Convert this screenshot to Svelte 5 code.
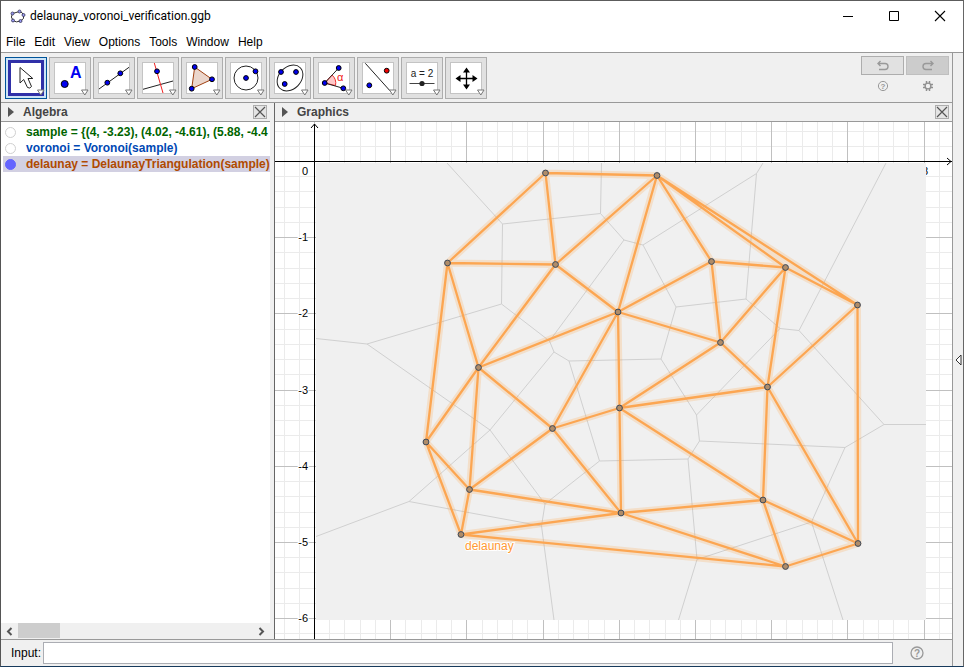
<script>
  const menus = ['File', 'Edit', 'View', 'Options', 'Tools', 'Window', 'Help'];

  const rows = [
    { text: 'sample = {(4, -3.23), (4.02, -4.61), (5.88, -4.4', kind: 'list', shown: false },
    { text: 'voronoi = Voronoi(sample)', kind: 'locus', shown: false },
    { text: 'delaunay = DelaunayTriangulation(sample)', kind: 'tri', shown: true }
  ];

  const tools = ['Move', 'Point', 'Line', 'Perpendicular Line', 'Polygon', 'Circle', 'Ellipse',
    'Angle', 'Reflect', 'Slider', 'Move Graphics View'];

  // Canvas origin and the length of one unit
  const ox = 39.5, oy = 39.5, unit = 76.2;
  const snap = (v) => Math.floor(v) + 0.5;
  const range = (a, b) => Array.from({ length: b - a + 1 }, (_, i) => a + i);
  const xs = range(-2, 120).map((i) => ({ p: snap(ox + (i * unit) / 5), major: i % 5 === 0 }));
  const ys = range(-2, 100).map((i) => ({ p: snap(oy + (i * unit) / 5), major: i % 5 === 0 }));
  const minorPath = xs.filter((l) => !l.major).map((l) => `M${l.p} 0V2000`).join('') +
    ys.filter((l) => !l.major).map((l) => `M0 ${l.p}H3000`).join('');
  const majorPath = xs.filter((l) => l.major).map((l) => `M${l.p} 0V2000`).join('') +
    ys.filter((l) => l.major).map((l) => `M0 ${l.p}H3000`).join('');

  const pts = {
    A: [270.5, 51], B: [382, 53.5], C: [172.5, 141], D: [280.5, 142.5], E: [436.5, 139.5],
    F: [510.5, 145.5], G: [582.5, 183], H: [343, 190], I: [445.5, 220.5], J: [203.5, 245.5],
    K: [492.5, 265], L: [344.5, 286], M: [277.5, 306.5], N: [151, 320], O: [194.5, 367.5],
    P: [488, 378], Q: [346, 391], R: [186, 412.5], S: [583, 421.5], T: [510.5, 444.5]
  };
  const edges = ('AB AC AD BD BH BE BF BG CD CJ CN DH DJ EH EI EF FI FK FG GK GS HJ HM HL HI IL IK ' +
    'JN JM JO KL KP KS LM LQ LP MO MQ NO NR OR OQ PQ PS PT QR QT RT ST').split(' ');
  const mesh = edges.map((e) => `M${pts[e[0]]}L${pts[e[1]]}`).join('');

  const cells =
    'M172 41L227.5 102L325.5 91.5L326.5 41M325.5 91.5L349 118L368 123L481.5 51.5L488 41' +
    'M349 118L274.5 219L226.5 182L227.5 102M226.5 182L92 222L41 216.5M92 222L215 308' +
    'L279 230L274.5 219M279 230L294 239L386 237L401 185L368 123M401 185L471 177L481.5 51.5' +
    'M471 177L505 206.5L524 208.5L611 41M524 208.5L609 302.5H651M609 302.5L570 325.5' +
    'L424.5 319L421.5 293L505 206.5M421.5 293L386 237M294 239L324.5 339L413 337L424.5 319' +
    'M324.5 339L270 382L215 308L134 379.5L41 414.5M134 379.5L266.5 404L270 382' +
    'M266.5 404L279 498M413 337L422 437.5L536.5 400L570 325.5M536.5 400L568 498' +
    'M422 437.5L403.5 498';
</script>

{#snippet dot(x, y, red = false)}
  <circle cx={x} cy={y} r="2.4" fill={red ? '#f00000' : '#0000f0'} stroke="#000" />
{/snippet}

{#snippet closeBox(name)}
  <button class="close" aria-label={name}>
    <svg width="12" height="12"><path d="M1 1L11 11M11 1L1 11" stroke="#555" stroke-width="1.2" /></svg>
  </button>
{/snippet}

<div class="window">
  <header class="title">
    <svg width="17" height="15" viewBox="0 0 17 15">
      <path d="M10.500 2.500L3.500 4.500Q1 8 4 11.500Q7 14 11.500 12Q16 10 14.500 6Q13.500 3 10.500 2.500Z" fill="none" stroke="#333" />
      <g fill="#9999f0" stroke="#335" stroke-width=".8">
        <circle cx="10.5" cy="2.5" r="1.5" /><circle cx="3.5" cy="4.5" r="1.5" />
        <circle cx="14.5" cy="6" r="1.5" /><circle cx="4" cy="11.5" r="1.5" />
        <circle cx="11.5" cy="12" r="1.5" />
      </g>
    </svg>
    <h1>delaunay_voronoi_verification.ggb</h1>
    <div class="caption">
      <button aria-label="Minimize"><svg width="12" height="12"><path d="M1 6.500H11" stroke="#000" /></svg></button>
      <button aria-label="Maximize"><svg width="12" height="12"><path d="M1.500 1.500H10.500V10.500H1.500Z" fill="none" stroke="#000" /></svg></button>
      <button aria-label="Close"><svg width="12" height="12"><path d="M1 1L11 11M11 1L1 11" stroke="#000" stroke-width="1.100" /></svg></button>
    </div>
  </header>

  <nav class="menu">
    {#each menus as m}<button>{m}</button>{/each}
  </nav>

  <div class="body">
    <div class="main">
      <div class="toolbar">
        <div class="tools">
          {#each tools as name, i}
            <button class="tool" class:active={i === 0} aria-label={name}>
              <svg width="40" height="40" viewBox="1 1 40 40" fill="none">
                {#if i === 0}
                  <rect x="4.5" y="4.500" width="33" height="33" fill="#fff" stroke="#3030a8" stroke-width="3" />
                  <path d="M15 10.500V26L18.700 22.500L22.500 30.500Q25 32 26.500 29.500L23 21.500H27.800Z" fill="#fff" stroke="#222" />
                {:else}
                  <rect x="5.500" y="5.500" width="31" height="31" fill="#fff" stroke="#c4c4c4" />
                {/if}
                {#if i === 1}
                  <circle cx="15.700" cy="27" r="3.500" fill="#0000f0" stroke="#000" />
                  <text x="21" y="21" class="big">A</text>
                {:else if i === 2}
                  <path d="M6 32L36 10.300" stroke="#222" />
                  {@render dot(14.3, 25.7)}{@render dot(27.3, 16.3)}
                {:else if i === 3}
                  <path d="M6 32.300L36 24" stroke="#222" />
                  <path d="M17.300 6L26 36" stroke="#f02020" />
                  {@render dot(20, 14.3)}
                {:else if i === 4}
                  <path d="M13.700 10L10.700 31.700L31 22.300Z" fill="#ebd6cc" stroke="#a04010" />
                  {@render dot(13.7, 10)}{@render dot(10.7, 31.7)}{@render dot(31, 22.3)}
                {:else if i === 5}
                  <circle cx="21" cy="21" r="12" stroke="#222" />
                  {@render dot(21, 21)}{@render dot(30.5, 14.3)}
                {:else if i === 6}
                  <ellipse cx="21" cy="21" rx="14.500" ry="11" stroke="#222" transform="rotate(-45 21 21)" />
                  {@render dot(12, 15)}{@render dot(27, 15)}{@render dot(15.7, 27)}
                {:else if i === 7}
                  <path d="M11.700 26L19 18A11 11 0 0 1 22.500 28.500Z" fill="#ffc8c8" stroke="#f03030" />
                  <path d="M25.700 11L11.700 26L30.300 31.300" stroke="#222" />
                  {@render dot(25.7, 11)}{@render dot(11.7, 26)}{@render dot(30.3, 31.3)}
                  <text x="24" y="24" class="alpha">α</text>
                {:else if i === 8}
                  <path d="M8.300 6.300L34.700 35.700" stroke="#222" />
                  {@render dot(29.7, 13.7, true)}{@render dot(12.3, 28.3)}
                {:else if i === 9}
                  <text x="21" y="20" class="small">a = 2</text>
                  <path d="M8.500 26.500H33.500" stroke="#444" />
                  <circle cx="21" cy="26.500" r="2.600" fill="#222" />
                {:else if i === 10}
                  <path d="M14 21.500H29M21.500 14V29" stroke="#000" stroke-width="1.300" />
                  <path d="M21.500 10.500L25 15.500H18ZM21.500 32.500L25 27.500H18ZM10.500 21.500L15.500 18V25ZM32.500 21.500L27.500 18V25Z" fill="#000" />
                {/if}
                <path d="M32.500 33H39L35.800 38Z" fill="#fff" stroke="#777" />
              </svg>
            </button>
          {/each}
        </div>
        <div class="actions">
          <button class="hist" aria-label="Undo">
            <svg width="14" height="12" fill="none" stroke="#999" stroke-width="1.400"><path d="M2 3.500H9Q12 3.500 12 6.500T9 9.500H3M4.500 1L2 3.500L4.500 6" /></svg>
          </button>
          <button class="hist off" aria-label="Redo" disabled>
            <svg width="14" height="12" fill="none" stroke="#999" stroke-width="1.400"><path d="M12 3.500H5Q2 3.500 2 6.500T5 9.500H11M9.500 1L12 3.500L9.500 6" /></svg>
          </button>
          <button class="mini" aria-label="Help">
            <svg width="12" height="12"><circle cx="6" cy="6" r="4.600" fill="none" stroke="#999" /><text x="6" y="9" class="q">?</text></svg>
          </button>
          <button class="mini" aria-label="Settings">
            <svg width="12" height="12" fill="none" stroke="#909090">
              <circle cx="6" cy="6" r="2.900" stroke-width="1.400" />
              <path stroke-width="1.500" d="M4.500 3.500V1M7.500 3.500V1M4.500 8.500V11M7.500 8.500V11M3.500 4.500H1M3.500 7.500H1M8.500 4.500H11M8.500 7.500H11" />
            </svg>
          </button>
        </div>
      </div>

      <div class="panels">
        <section class="algebra">
          <div class="head">
            <svg width="6" height="10"><path d="M0 0L6 5L0 10Z" fill="#555" /></svg>
            <h2>Algebra</h2>
            {@render closeBox('Close Algebra')}
          </div>
          <ul>
            {#each rows as r}
              <li class={r.kind}>
                <button class="mark" class:on={r.shown} aria-label="Show or hide object"></button>
                <span>{r.text}</span>
              </li>
            {/each}
          </ul>
          <div class="scroll">
            <button aria-label="Scroll left"><svg width="7" height="9"><path d="M5.500 1L2 4.500L5.500 8" fill="none" stroke="#555" stroke-width="2" /></svg></button>
            <div class="track"><div class="thumb"></div></div>
            <button aria-label="Scroll right"><svg width="7" height="9"><path d="M1.500 1L5 4.500L1.500 8" fill="none" stroke="#555" stroke-width="2" /></svg></button>
          </div>
        </section>

        <section class="graphics">
          <div class="head">
            <svg width="6" height="10"><path d="M0 0L6 5L0 10Z" fill="#555" /></svg>
            <h2>Graphics</h2>
            {@render closeBox('Close Graphics')}
          </div>
          <div class="canvas">
            <svg width="100%" height="100%" fill="none">
              <path d={minorPath} stroke="#ebebeb" />
              <path d={majorPath} stroke="#c0c0c0" />
              <text x="650" y="53" class="axis mid">8</text>
              <rect x="41" y="41" width="610" height="457" fill="#f0f0f0" />
              <path d={cells} stroke="#d0d0d0" />

              <path d="M0 39.500H3000M39.500 2V2000M36 6L39.500 2L43 6" stroke="#000" />
              <svg x="100%" y="39.500" width="1" height="1" overflow="visible"><path d="M-5 -3.500L-1 0L-5 3.500" stroke="#000" /></svg>
              <text x="33" y="53" class="axis">0</text>
              {#each [1, 2, 3, 4, 5, 6] as n}
                <text x="33" y={Math.floor(oy + n * unit + 4)} class="axis">-{n}</text>
              {/each}

              <path d={mesh} stroke="#ff9933" stroke-width="7" stroke-linecap="round" opacity=".2" />
              <path d={mesh} stroke="#fca652" stroke-width="2.300" stroke-linecap="round" />
              {#each Object.values(pts) as p}
                <circle cx={p[0]} cy={p[1]} r="2.900" fill="#b08c68" stroke="#3c4a5c" />
              {/each}
              <text x="190" y="428" class="name">delaunay</text>
            </svg>
          </div>
        </section>
      </div>

      <div class="inputbar">
        <label for="cmd">Input:</label>
        <input id="cmd" type="text" />
        <button class="help" aria-label="Input Help">
          <svg width="14" height="14"><circle cx="7" cy="7" r="6" fill="none" stroke="#999" stroke-width="1.300" /><text x="7" y="11" class="q large">?</text></svg>
        </button>
      </div>
    </div>
    <aside>
      <button aria-label="Show sidebar"><svg width="7" height="12"><path d="M6 1V11L1 6Z" fill="#fff" stroke="#333" /></svg></button>
    </aside>
  </div>
</div>

<style>
  :global(body) { background: #fff; }
  .window, .window :is(button, input) { font-family: "Liberation Sans", Arial, sans-serif; font-size: 12px; color: #000; }
  .window { box-sizing: border-box; min-height: 100vh; display: flex; flex-direction: column; background: #fff; border: 1px solid #173a5c; border-top-color: #5c5c5c; border-right-color: #666; border-left-color: #555; }
  .window * { box-sizing: border-box; }
  svg { display: block; flex: none; }
  button { margin: 0; padding: 0; border: 0; background: none; display: flex; align-items: center; justify-content: center; }
  h1, h2, ul { margin: 0; padding: 0; }

  .title { display: flex; align-items: center; height: 30px; padding-left: 8px; gap: 4px; }
  h1 { font: 400 12px Roboto, "Noto Sans", sans-serif; flex: 1; }
  .caption { display: flex; }
  .caption button { width: 46px; height: 30px; }
  .menu { display: flex; gap: 9px; height: 21px; padding-left: 5px; }
  .menu button { height: 21px; }

  .body { flex: 1; display: flex; border-top: 1px solid #999; background: #f0f0f0; }
  .main { flex: 1; min-width: 0; display: flex; flex-direction: column; }
  aside { width: 11px; border-left: 1px solid #999; display: flex; align-items: center; justify-content: center; }

  .toolbar { display: flex; justify-content: space-between; height: 50px; padding: 3px 3px 0 4px; border-bottom: 1px solid #999; }
  .tools { display: flex; gap: 2px; padding-top: 1px; }
  .tool { width: 42px; height: 42px; border: 1px solid #adadad; background: #e1e1e1; }
  .tool.active { border-color: #005499; background: #cce4f7; }
  .actions { display: grid; grid-template-columns: 43px 43px; gap: 5px 2px; align-content: start; }
  .hist { height: 19px; border: 1px solid #adadad; background: #e1e1e1; }
  .hist.off { background: #ccc; border-color: #bfbfbf; }
  .mini { height: 12px; }

  .panels { flex: 1; display: flex; }
  .algebra { width: 269px; display: flex; flex-direction: column; }
  .graphics { flex: 1; min-width: 0; display: flex; flex-direction: column; margin-left: 4px; border-left: 1px solid #666; }
  .head { display: flex; align-items: center; height: 19px; padding: 0 3px 0 7px; gap: 9px; border-bottom: 1px solid #999; }
  h2 { font-size: 12px; font-weight: 700; color: #444; flex: 1; }
  .close { width: 14px; height: 14px; border: 1px solid #adadad; background: #e4e4e4; }
  .canvas { flex: 1; display: flex; min-height: 0; background: #fff; overflow: hidden; }
  .canvas svg { flex: 1; height: auto; }

  ul { flex: 1; list-style: none; background: #fff; padding: 2px 0 0 2px; }
  li { display: flex; align-items: center; height: 16px; padding-left: 2px; gap: 10px; font-weight: 700; white-space: nowrap; }
  li.list { color: #006400; }
  li.locus { color: #0048b4; }
  li.tri { color: #b04a00; background: #d2d0e2; }
  .mark { flex: none; width: 11px; height: 11px; border-radius: 50%; border: 1px solid #d0d0d0; background: #fff; }
  .mark.on { border-color: #6464ff; background: #6464ff; }
  .scroll { display: flex; height: 16px; }
  .scroll button { width: 17px; }
  .track { flex: 1; }
  .thumb { width: 18%; height: 15px; background: #cdcdcd; }

  .inputbar { display: flex; align-items: center; height: 27px; padding: 0 28px 0 10px; border-top: 1px solid #999; }
  .inputbar label { width: 32px; }
  .inputbar input { flex: 1; min-width: 0; height: 22px; border: 1px solid #abadb3; background: #fff; padding: 0 3px; }
  .help { margin-left: 17px; }

  .big { font-size: 16px; font-weight: 700; fill: #0000f0; }
  .alpha { font-size: 11px; fill: #f02020; }
  .small { font-size: 10px; fill: #222; text-anchor: middle; }
  .q { font-size: 8px; font-weight: 700; fill: #999; text-anchor: middle; }
  .q.large { font-size: 10px; }
  .axis { font-size: 11px; fill: #000; stroke: #fff; stroke-width: 2px; paint-order: stroke; text-anchor: end; }
  .axis.mid { text-anchor: middle; }
  .name { font-size: 12px; fill: #ff9933; stroke: #fff; stroke-width: 2px; paint-order: stroke; }
</style>
